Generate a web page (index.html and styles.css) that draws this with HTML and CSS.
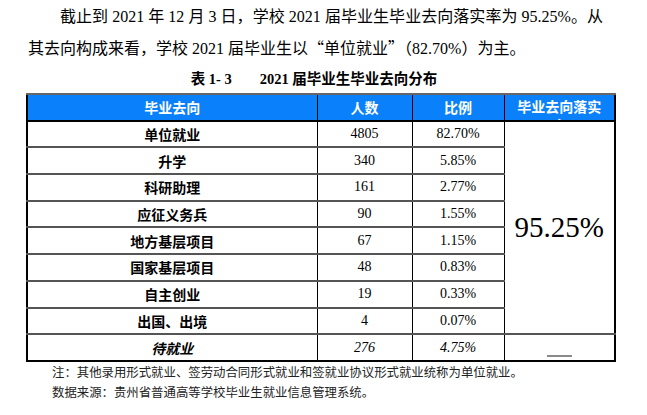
FILE: index.html
```html
<!DOCTYPE html>
<html lang="zh-CN">
<head>
<meta charset="utf-8">
<link rel="stylesheet" href="styles.css">
</head>
<body>
<div class="page">
  <p class="para">截止到 2021 年 12 月 3 日，学校 2021 届毕业生毕业去向落实率为 95.25%。从其去向构成来看，学校 2021 届毕业生以<span class="cjk">“</span>单位就业<span class="cjk">”</span>（82.70%）为主。</p>
  <div class="caption"><span class="cjk">表</span> 1- 3<span class="gap"></span>2021 届毕业生毕业去向分布</div>
  <table class="grid">
    <colgroup>
      <col class="c1"><col class="c2"><col class="c3"><col class="c4">
    </colgroup>
    <thead>
      <tr class="head">
        <th>毕业去向</th>
        <th>人数</th>
        <th>比例</th>
        <th class="wrapcell"><div class="clip">毕业去向落实率</div></th>
      </tr>
    </thead>
    <tbody>
      <tr><td class="label">单位就业</td><td>4805</td><td>82.70%</td><td class="big" rowspan="8">95.25%</td></tr>
      <tr><td class="label">升学</td><td>340</td><td>5.85%</td></tr>
      <tr><td class="label">科研助理</td><td>161</td><td>2.77%</td></tr>
      <tr><td class="label">应征义务兵</td><td>90</td><td>1.55%</td></tr>
      <tr><td class="label">地方基层项目</td><td>67</td><td>1.15%</td></tr>
      <tr><td class="label">国家基层项目</td><td>48</td><td>0.83%</td></tr>
      <tr><td class="label">自主创业</td><td>19</td><td>0.33%</td></tr>
      <tr><td class="label">出国、出境</td><td>4</td><td>0.07%</td></tr>
      <tr class="wait"><td class="label">待就业</td><td>276</td><td>4.75%</td><td class="dashcell"><div class="dash"></div></td></tr>
    </tbody>
  </table>
  <div class="notes">
    <div>注：其他录用形式就业、签劳动合同形式就业和签就业协议形式就业统称为单位就业。</div>
    <div>数据来源：贵州省普通高等学校毕业生就业信息管理系统。</div>
  </div>
</div>
</body>
</html>
```
FILE: styles.css
```css
html, body {
  margin: 0;
  padding: 0;
  background: #ffffff;
}
body {
  font-family: "Liberation Serif", "Noto Sans CJK SC", serif;
  color: #000;
}
.page {
  padding-top: 2px;
}
.para {
  margin: 0 0 0 28px;
  width: 575px;
  font-size: 16px;
  line-height: 30px;
  text-indent: 32px;
  text-align: justify;
}
.cjk {
  font-family: "Noto Sans CJK SC", sans-serif;
}
.caption {
  margin: 4px 0 0 28px;
  width: 572px;
  text-align: center;
  font-size: 14.5px;
  line-height: 20px;
  font-weight: bold;
}
.gap {
  display: inline-block;
  width: 28px;
}
.grid {
  margin: 4px 0 0 26px;
  width: 588px;
  table-layout: fixed;
  border-collapse: collapse;
  border: 2px solid #000;
}
.c1 { width: 290px; }
.c2 { width: 95px; }
.c3 { width: 92px; }
.c4 { width: 111px; }
.grid th, .grid td {
  padding: 0;
  text-align: center;
  vertical-align: middle;
  border-left: 1px solid #000;
  border-right: 1px solid #000;
  border-top: 2px solid #555;
  border-bottom: 2px solid #555;
  height: 24.7px;
  font-size: 14px;
}
.head th {
  background: #0a80fb;
  color: #fff;
  font-family: "Noto Sans CJK SC", sans-serif;
  font-weight: bold;
  border-top: 2px solid #666;
  border-bottom: 2px solid #000;
  line-height: 20px;
}
.head th.wrapcell {
  vertical-align: top;
  padding: 0 6px;
}
.clip {
  overflow: hidden;
  line-height: 19px;
  padding-top: 2px;
  box-sizing: border-box;
  height: 24.5px;
}
.label {
  font-family: "Noto Sans CJK SC", sans-serif;
  font-weight: bold;
}
.grid td.big {
  font-size: 29px;
  border-right: 2px solid #000;
  background: #fff;
}
.wait td {
  font-style: italic;
  border-bottom: 2px solid #000;
}
.grid td.dashcell {
  vertical-align: bottom;
  border-top: 2px solid #555;
}
.dash {
  width: 25px;
  height: 2px;
  background: #8a8a8a;
  margin: 0 auto 3px;
}
.notes {
  margin-left: 52px;
  font-size: 12.4px;
  line-height: 20px;
  color: #222;
  font-family: "Noto Sans CJK SC", sans-serif;
}
```
